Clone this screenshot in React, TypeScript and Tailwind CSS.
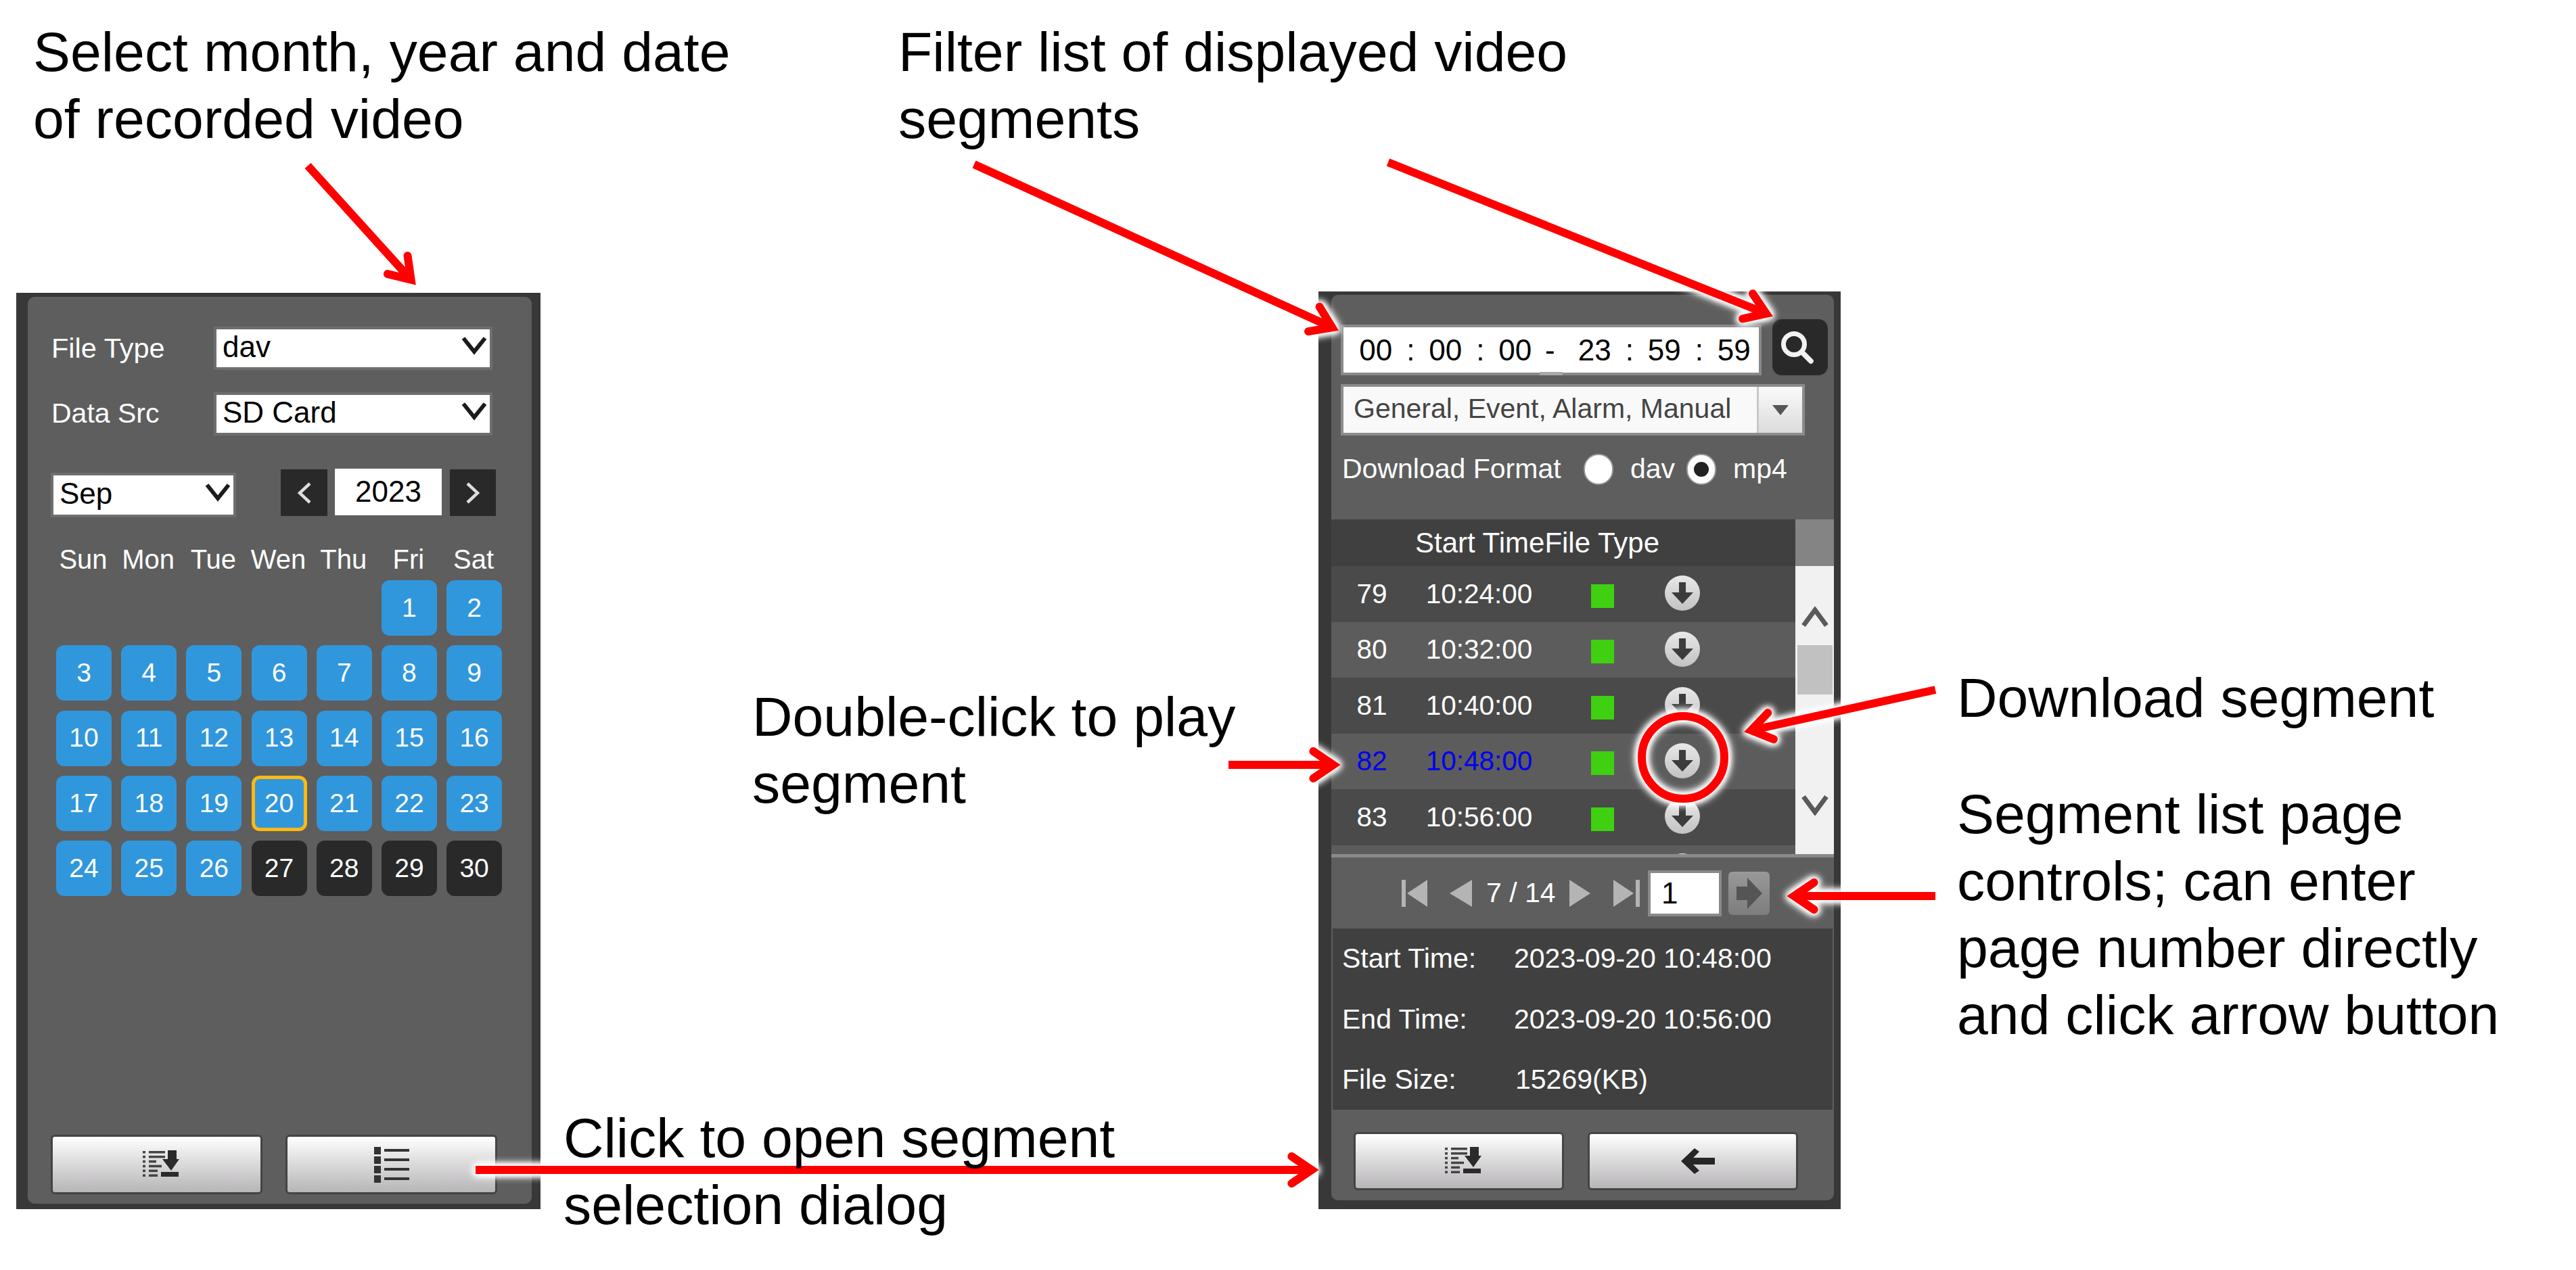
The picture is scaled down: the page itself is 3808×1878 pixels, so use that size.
const rows = [
  { no: 79, time: "10:24:00" },
  { no: 80, time: "10:32:00" },
  { no: 81, time: "10:40:00" },
  { no: 82, time: "10:48:00", active: true },
  { no: 83, time: "10:56:00" },
];

const weekdays = ["Sun", "Mon", "Tue", "Wen", "Thu", "Fri", "Sat"];

const arrows = [
  [455, 245, 617, 424],
  [1440, 243, 1982, 490],
  [2052, 240, 2624, 469],
  [2861, 1020, 2575, 1083],
  [1816, 1131, 1985, 1131],
  [2861, 1325, 2638, 1325],
  [703, 1730, 1953, 1730],
];

function Arrow({ line }: { line: number[] }) {
  const [x1, y1, x2, y2] = line;
  const a = Math.atan2(y2 - y1, x2 - x1);
  const len = 48;
  const spread = 0.43;
  const p1 = [x2 - len * Math.cos(a - spread), y2 - len * Math.sin(a - spread)];
  const p2 = [x2 - len * Math.cos(a + spread), y2 - len * Math.sin(a + spread)];
  const inset = 14;
  const vx = x2 - inset * Math.cos(a);
  const vy = y2 - inset * Math.sin(a);
  return (
    <g fill="none" stroke="#ff0000" strokeWidth="12">
      <line x1={x1} y1={y1} x2={vx} y2={vy} />
      <polyline
        points={`${p1[0]},${p1[1]} ${vx},${vy} ${p2[0]},${p2[1]}`}
        strokeLinecap="round"
        strokeLinejoin="miter"
        strokeMiterlimit="10"
      />
    </g>
  );
}

function Chevron() {
  return (
    <svg viewBox="0 0 38 28" className="w-[38px] h-[28px]">
      <path d="M3 3 L19 23 L35 3" fill="none" stroke="#1c1c1c" strokeWidth="6" />
    </svg>
  );
}

function SelectBox({ label, className }: { label: string; className: string }) {
  return (
    <div className={`flex items-center justify-between bg-white border-4 border-[#6e6e6e] text-black text-[44px] pl-[9px] pr-[4px] ${className}`}>
      <span className="-mt-[4px]">{label}</span>
      <span className="-mt-[8px]">
        <Chevron />
      </span>
    </div>
  );
}

function DayCell({ day }: { day: number }) {
  let tone = "bg-[#3197dc]";
  if (day > 26) tone = "bg-[#292929]";
  if (day === 20) tone = "bg-[#3197dc] border-[5px] border-[#fdb913]";
  return (
    <div className={`w-[82px] h-[82px] rounded-[12px] flex items-center justify-center text-[39px] text-white ${tone}`}>
      {day}
    </div>
  );
}

function ListDownloadIcon() {
  const lines = [24, 24, 11, 19, 13, 13];
  return (
    <svg viewBox="0 0 54 41" className="w-[54px] h-[41px] ml-[13px] -mt-[6px]">
      {lines.map((w, i) => (
        <g key={i} fill="#444">
          <rect x="0" y={3 + i * 6.9} width="4" height="3.5" />
          <rect x="9" y={3 + i * 6.9} width={w} height="3.5" />
        </g>
      ))}
      <path d="M37 2 H50 V15 H54 L42 32 L29 15 H37 Z" fill="#2b2b2b" />
      <rect x="27" y="34" width="26" height="7" fill="#2b2b2b" />
    </svg>
  );
}

function ListIcon() {
  return (
    <svg viewBox="0 0 52 53" className="w-[52px] h-[53px]">
      {[0, 14, 28, 42].map((y) => (
        <g key={y} fill="#333">
          <rect x="0" y={y} width="10" height="11" />
          <rect x="15" y={y + 3} width="37" height="4" />
        </g>
      ))}
    </svg>
  );
}

function BackIcon() {
  return (
    <svg viewBox="0 0 50 38" className="w-[50px] h-[38px] ml-[14px]">
      <path d="M20 0 L27 5 L18 14 H50 V24 H18 L27 33 L20 38 L0 19 Z" fill="#262626" />
    </svg>
  );
}

function PanelButton({ children, className }: { children: React.ReactNode; className: string }) {
  return (
    <div className={`rounded-[6px] border-[3px] border-[#444] bg-gradient-to-b from-white to-[#b7b5b7] flex items-center justify-center ${className}`}>
      {children}
    </div>
  );
}

function DownloadDot() {
  return (
    <div className="w-[52px] h-[52px] rounded-full bg-gradient-to-b from-[#e9e9e9] to-[#c2c2c2] flex items-center justify-center">
      <svg viewBox="0 0 32 32" className="w-[32px] h-[32px]">
        <path d="M11 0 H21 V15 H32 L16 32 L0 15 H11 Z" fill="#3c3c3c" />
      </svg>
    </div>
  );
}

function PageIcon({ d, w }: { d: string; w: number }) {
  return (
    <svg viewBox={`0 0 ${w} 40`} style={{ width: w, height: 40 }} className="shrink-0">
      <path d={d} fill="#b4b4b4" />
    </svg>
  );
}

function DatePanel() {
  return (
    <div className="ml-[24px] mt-[433px] w-[775px] h-[1355px] shrink-0 bg-[#383838] pl-[17px] pr-[13px] pt-[6px] pb-[8px]">
      <div className="h-full bg-[#5e5e5e] rounded-[10px] flex flex-col">
        <div className="flex items-center mt-[44px] h-[64px]">
          <span className="w-[275px] pl-[35px] text-[41.5px] text-white">File Type</span>
          <SelectBox label="dav" className="w-[412px] h-[64px]" />
        </div>
        <div className="flex items-center mt-[33px] h-[64px]">
          <span className="w-[275px] pl-[35px] text-[41px] text-white">Data Src</span>
          <SelectBox label="SD Card" className="w-[412px] h-[64px]" />
        </div>

        <div className="flex items-start mt-[50px] pl-[34px]">
          <SelectBox label="Sep" className="w-[274px] h-[66px] mt-[5px]" />
          <div className="ml-[66px] w-[69px] h-[69px] bg-[#292929] flex items-center justify-center">
            <svg viewBox="0 0 22 32" className="w-[22px] h-[32px]">
              <path d="M19 2 L4 16 L19 30" fill="none" stroke="#dddddd" strokeWidth="4.5" />
            </svg>
          </div>
          <div className="ml-[11px] w-[158px] h-[69px] bg-white text-black text-[44px] flex items-center justify-center -mt-[1px] pb-[2px]">2023</div>
          <div className="ml-[12px] w-[68px] h-[69px] bg-[#292929] flex items-center justify-center">
            <svg viewBox="0 0 22 32" className="w-[22px] h-[32px]">
              <path d="M3 2 L18 16 L3 30" fill="none" stroke="#dddddd" strokeWidth="4.5" />
            </svg>
          </div>
        </div>

        <div className="pl-[42px] mt-[31px] grid grid-cols-[repeat(7,82px)] gap-x-[14.2px] h-[62px] items-center text-[40px] text-white text-center">
          {weekdays.map((d) => (
            <span key={d} className="whitespace-nowrap justify-self-center -ml-[2px]">{d}</span>
          ))}
        </div>

        <div className="pl-[42px] grid grid-cols-[repeat(7,82px)] gap-x-[14.2px] gap-y-[14.3px]">
          <div className="col-span-5" />
          {Array.from({ length: 30 }, (_, i) => (
            <DayCell key={i} day={i + 1} />
          ))}
        </div>

        <div className="mt-auto mb-[14px] pl-[34px] flex gap-[34px]">
          <PanelButton className="w-[313px] h-[88px]">
            <ListDownloadIcon />
          </PanelButton>
          <PanelButton className="w-[313px] h-[88px]">
            <ListIcon />
          </PanelButton>
        </div>
      </div>
    </div>
  );
}

function SegmentPanel() {
  const timeCell = "w-[51.5px] text-center shrink-0";
  return (
    <div className="ml-[1150px] mt-[431px] w-[772px] h-[1357px] shrink-0 bg-[#383838] pl-[19px] pr-[10px] pt-[5px] pb-[13px]">
      <div className="h-full bg-[#5e5e5e] rounded-[10px] flex flex-col">
        {/* time filter */}
        <div className="flex items-end pl-[14px] mt-[36px]">
          <div className="relative w-[622px] h-[75px] bg-white border-4 border-[#8a8a8a] flex items-center pl-[22px] text-[44px] text-black">
            {["00", ":", "00", ":", "00", "-"].map((t, i) => (
              <span key={i} className={timeCell}>{t}</span>
            ))}
            <span className="w-[14.5px] shrink-0" />
            {["23", ":", "59", ":", "59"].map((t, i) => (
              <span key={i} className={timeCell}>{t}</span>
            ))}
            <span className="absolute left-[290px] -bottom-[4px] w-[34px] h-[5px] bg-[#a8a8a8]" />
          </div>
          <div className="ml-[16px] w-[82px] h-[83px] rounded-[14px] bg-[#292929] flex items-center justify-center">
            <svg viewBox="0 0 48 48" className="w-[48px] h-[48px] -ml-[8px]">
              <circle cx="19" cy="19" r="15.5" fill="none" stroke="#f2f2f2" strokeWidth="7" />
              <line x1="31" y1="31" x2="44" y2="44" stroke="#f2f2f2" strokeWidth="7.5" strokeLinecap="round" />
            </svg>
          </div>
        </div>

        <div className="ml-[14px] mt-[13px] w-[686px] h-[76px] bg-[#f9f9f9] border-4 border-[#8c8c8c] flex items-stretch">
          <span className="flex-1 pl-[15px] text-[41px] text-[#444] flex items-center -mt-[3px] whitespace-nowrap">General, Event, Alarm, Manual</span>
          <span className="w-[67px] border-l-[3px] border-[#c8c8c8] bg-gradient-to-b from-[#fafafa] to-[#dcdcdc] flex items-center justify-center">
            <span className="w-0 h-0 border-l-[12px] border-r-[12px] border-t-[15px] border-l-transparent border-r-transparent border-t-[#555]" />
          </span>
        </div>

        <div className="flex items-center mt-[25px] h-[50px] pl-[16px] text-[41px] text-white">
          <span className="w-[357px] whitespace-nowrap">Download Format</span>
          <span className="w-[44px] h-[46px] rounded-full bg-white border-2 border-[#9a9a9a] shrink-0" />
          <span className="ml-[25px] w-[83px]">dav</span>
          <span className="w-[44px] h-[46px] rounded-full bg-white border-2 border-[#9a9a9a] shrink-0 flex items-center justify-center">
            <span className="w-[22px] h-[22px] rounded-full bg-[#222]" />
          </span>
          <span className="ml-[25px]">mp4</span>
        </div>

        {/* segment table */}
        <div className="mt-[49px] h-[495px] flex overflow-hidden">
          <div className="w-[686px]">
            <div className="h-[69px] bg-[#404040] pl-[124px] flex items-center text-[42px] text-white whitespace-nowrap">
              Start TimeFile Type
            </div>
            {rows.map((r, i) => (
              <div
                key={r.no}
                className={`h-[82.5px] flex items-center text-[40.5px] ${i % 2 ? "bg-[#5c5c5c]" : "bg-[#4a4a4a]"} ${r.active ? "text-[#0000f0]" : "text-white"}`}
              >
                <span className="w-[120px] text-center">{r.no}</span>
                <span className="w-[197px] text-center">{r.time}</span>
                <span className="ml-[67px] w-[34px] h-[35px] mt-[6px] bg-[#3fd012]" />
                <span className="ml-[75px] -mt-[2px]">
                  <DownloadDot />
                </span>
              </div>
            ))}
            <div className="h-[14px] bg-[#5c5c5c] overflow-hidden pl-[493px] pt-[12px]">
              <DownloadDot />
            </div>
          </div>
          <div className="w-[57px] flex flex-col">
            <div className="h-[69px] bg-[#848484]" />
            <div className="flex-1 bg-[#f1f1f1] flex flex-col items-center">
              <svg viewBox="0 0 40 32" className="w-[40px] h-[32px] mt-[60px]">
                <path d="M3 28 L20 5 L37 28" fill="none" stroke="#5a5a5a" strokeWidth="7" />
              </svg>
              <div className="mt-[25px] w-[52px] h-[73px] bg-[#c1c1c1]" />
              <svg viewBox="0 0 40 32" className="w-[40px] h-[32px] mt-[147px]">
                <path d="M3 4 L20 27 L37 4" fill="none" stroke="#5a5a5a" strokeWidth="7" />
              </svg>
            </div>
          </div>
        </div>
        <div className="h-[5px] bg-[#8a8a8a]" />

        {/* pager */}
        <div className="h-[105px] flex items-center pl-[104px] text-white">
          <PageIcon w={38} d="M0 0 H6 V40 H0 Z M38 0 V40 L8 20 Z" />
          <span className="ml-[33px]"><PageIcon w={33} d="M33 0 V40 L0 20 Z" /></span>
          <span className="ml-[21px] w-[102px] text-[41px] whitespace-nowrap">7 / 14</span>
          <span className="ml-[21px]"><PageIcon w={31} d="M0 0 L31 20 L0 40 Z" /></span>
          <span className="ml-[34px]"><PageIcon w={39} d="M0 0 L30 20 L0 40 Z M33 0 H39 V40 H33 Z" /></span>
          <div className="ml-[12px] w-[109px] h-[68px] bg-white border-4 border-[#8a8a8a] pl-[16px] text-[44px] text-black flex items-center">1</div>
          <div className="ml-[10px] w-[61px] h-[64px] rounded-[6px] bg-gradient-to-b from-[#999] to-[#7d7d7d] flex items-center justify-center">
            <svg viewBox="0 0 38 46" className="w-[38px] h-[46px]">
              <path d="M0 13 H16 V0 L38 23 L16 46 V33 H0 Z" fill="#555" />
            </svg>
          </div>
        </div>

        {/* selected segment info */}
        <div className="mx-[2px] h-[268px] bg-[#404040] text-[41px] text-white">
          <div className="h-[89.5px] flex items-center pl-[14px]">
            <span className="w-[254px]">Start Time:</span>
            <span>2023-09-20 10:48:00</span>
          </div>
          <div className="h-[89.5px] flex items-center pl-[14px]">
            <span className="w-[254px]">End Time:</span>
            <span>2023-09-20 10:56:00</span>
          </div>
          <div className="h-[89px] flex items-center pl-[14px]">
            <span className="w-[256px]">File Size:</span>
            <span>15269(KB)</span>
          </div>
        </div>

        <div className="mt-[33px] pl-[33px] flex gap-[35px]">
          <PanelButton className="w-[311px] h-[86px]">
            <ListDownloadIcon />
          </PanelButton>
          <PanelButton className="w-[311px] h-[86px]">
            <BackIcon />
          </PanelButton>
        </div>
      </div>
    </div>
  );
}

const calloutText = "absolute text-[82.4px] leading-[99px] text-black whitespace-nowrap";

export default function App() {
  return (
    <div className="relative w-[3808px] h-[1878px] bg-white overflow-hidden flex items-start font-['Liberation_Sans',Arial,sans-serif]">
      <DatePanel />
      <SegmentPanel />

      {/* annotations */}
      <svg viewBox="0 0 3808 1878" className="absolute inset-0 w-[3808px] h-[1878px] pointer-events-none [filter:drop-shadow(0_0_5px_#fff)_drop-shadow(0_0_5px_#fff)_drop-shadow(0_0_3px_#fff)]">
        {arrows.map((a, i) => (
          <Arrow key={i} line={a} />
        ))}
        <circle cx="2488" cy="1120" r="61" fill="none" stroke="#ff0000" strokeWidth="12" />
      </svg>

      <div className={`${calloutText} left-[49px] top-[27px]`}>
        Select month, year and date<br />of recorded video
      </div>
      <div className={`${calloutText} left-[1328px] top-[27px]`}>
        Filter list of displayed video<br />segments
      </div>
      <div className={`${calloutText} left-[1112px] top-[1010px]`}>
        Double-click to play<br />segment
      </div>
      <div className={`${calloutText} left-[2893px] top-[982px]`}>Download segment</div>
      <div className={`${calloutText} left-[2893px] top-[1154px]`}>
        Segment list page<br />controls; can enter<br />page number directly<br />and click arrow button
      </div>
      <div className={`${calloutText} left-[833px] top-[1633px]`}>
        Click to open segment<br />selection dialog
      </div>
    </div>
  );
}
